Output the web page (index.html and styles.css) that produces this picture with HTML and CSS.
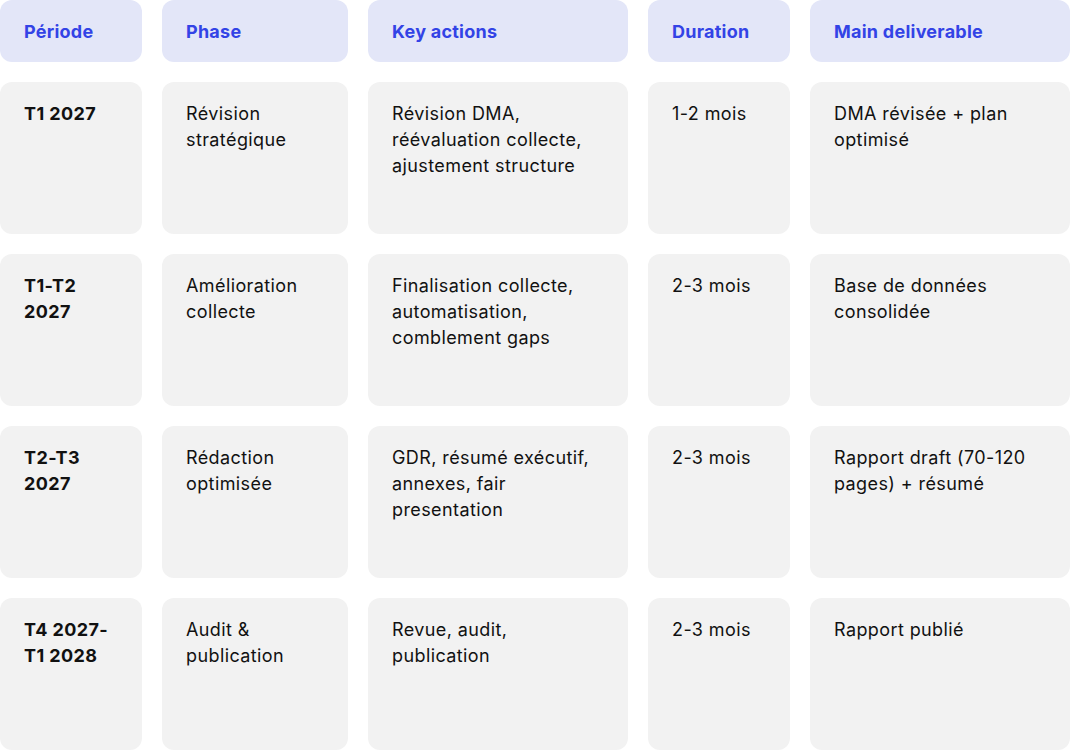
FILE: index.html
```html
<!DOCTYPE html>
<html lang="fr">
<head>
<meta charset="utf-8">
<link rel="stylesheet" href="styles.css">
</head>
<body>
<div class="table">
  <div class="cell head">Période</div>
  <div class="cell head">Phase</div>
  <div class="cell head">Key actions</div>
  <div class="cell head">Duration</div>
  <div class="cell head">Main deliverable</div>

  <div class="cell period">T1 2027</div>
  <div class="cell">Révision stratégique</div>
  <div class="cell">Révision DMA, réévaluation collecte, ajustement structure</div>
  <div class="cell">1-2 mois</div>
  <div class="cell">DMA révisée + plan optimisé</div>

  <div class="cell period">T1-T2 2027</div>
  <div class="cell">Amélioration collecte</div>
  <div class="cell">Finalisation collecte, automatisation, comblement gaps</div>
  <div class="cell">2-3 mois</div>
  <div class="cell">Base de données consolidée</div>

  <div class="cell period">T2-T3 2027</div>
  <div class="cell">Rédaction optimisée</div>
  <div class="cell">GDR, résumé exécutif, annexes, fair presentation</div>
  <div class="cell">2-3 mois</div>
  <div class="cell">Rapport draft (70-120 pages) + résumé</div>

  <div class="cell period">T4 2027-T1 2028</div>
  <div class="cell">Audit &amp; publication</div>
  <div class="cell">Revue, audit, publication</div>
  <div class="cell">2-3 mois</div>
  <div class="cell">Rapport publié</div>
</div>
</body>
</html>
```
FILE: styles.css
```css
html, body {
  margin: 0;
  padding: 0;
  background: #ffffff;
}
body {
  font-family: Inter, "Liberation Sans", sans-serif;
  color: #111111;
}
.table {
  display: grid;
  grid-template-columns: 142px 186px 260px 142px 260px;
  grid-template-rows: 62px repeat(4, 152px);
  gap: 20px;
  width: 1070px;
}
.cell {
  background: #f2f2f2;
  border-radius: 12px;
  padding: 19px 24px;
  font-size: 18px;
  line-height: 26px;
  letter-spacing: 0.4px;
  box-sizing: border-box;
}
.head {
  background: #e3e6f8;
  color: #3343e6;
  font-weight: 700;
  letter-spacing: 0.25px;
  display: flex;
  align-items: center;
  padding-top: 2px;
  padding-bottom: 0;
}
.period {
  font-weight: 700;
}
```
